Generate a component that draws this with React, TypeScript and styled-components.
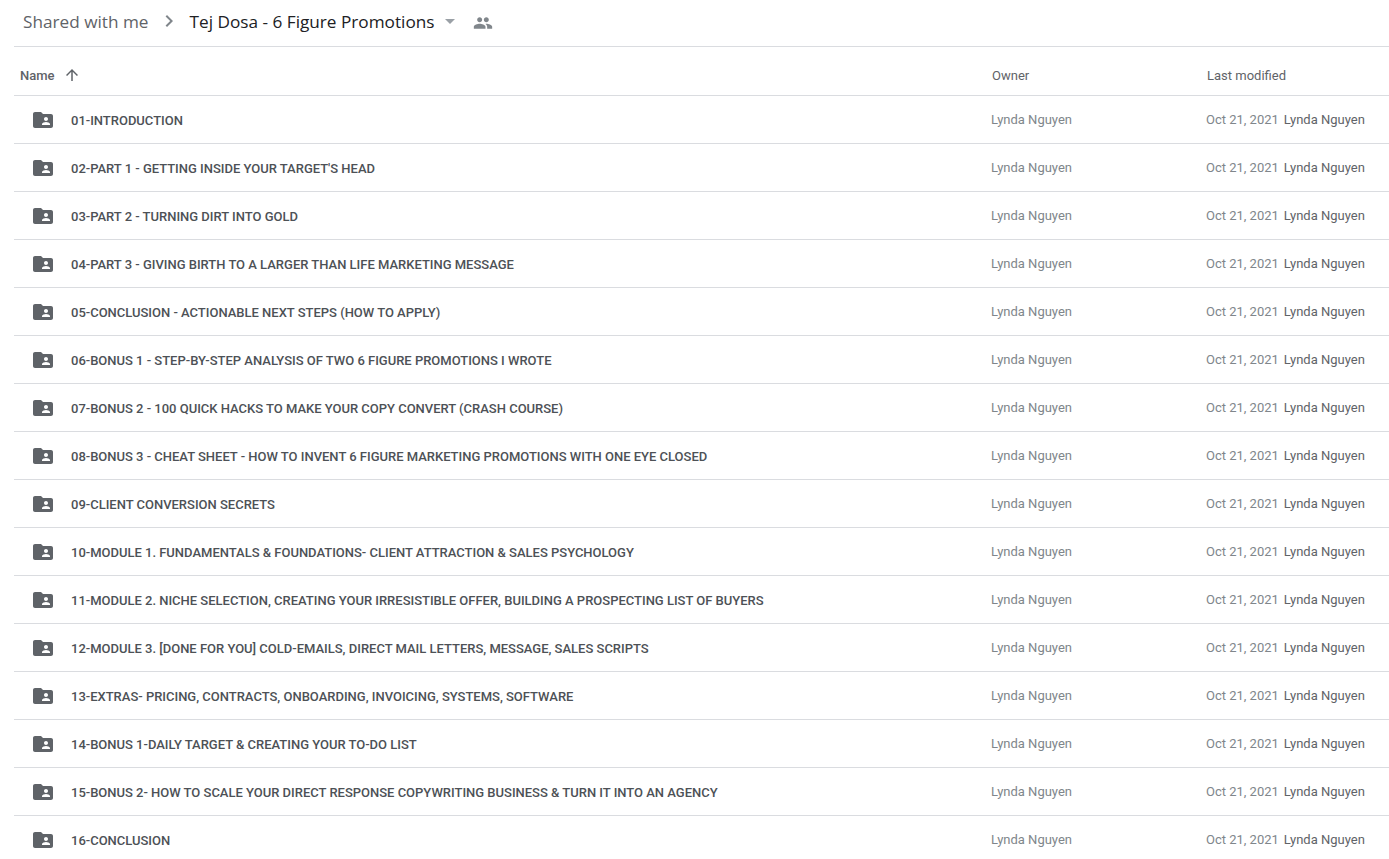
import React from 'react'
import styled, { createGlobalStyle } from 'styled-components'

const GlobalStyle = createGlobalStyle`
  html, body {
    margin: 0;
    padding: 0;
    height: 100%;
    overflow: hidden;
    background: #fff;
    font-family: Roboto, "Liberation Sans", sans-serif;
  }
`

const Page = styled.div`
  width: 1389px;
  height: 859px;
  overflow: hidden;
  padding-left: 14px;
  box-sizing: border-box;
`

const Breadcrumb = styled.header`
  height: 46px;
  display: flex;
  align-items: center;
  padding-left: 9px;
  border-bottom: 1px solid #dadce0;
  font-family: "Open Sans", sans-serif;
  font-size: 17.2px;
`

const Crumb = styled.span<{ $current?: boolean }>`
  color: ${p => (p.$current ? '#202124' : '#5f6368')};
  white-space: nowrap;
  margin-bottom: 4px;
`

const Chevron = styled.svg`
  width: 24px;
  height: 24px;
  margin: 0 9px 4px 8px;
  fill: #80868b;
`

const Caret = styled.svg`
  width: 24px;
  height: 24px;
  margin: 0 0 4px 4px;
  fill: #9aa0a6;
`

const PeopleIcon = styled.svg`
  width: 20px;
  height: 20px;
  margin-left: 11px;
  fill: #80868b;
`

const Columns = styled.div`
  display: grid;
  grid-template-columns: 978px 215px 1fr;
  align-items: center;
`

const HeaderRow = styled(Columns)`
  height: 49px;
  border-bottom: 1px solid #dadce0;
  font-size: 13px;
  color: #5f6368;
  padding-top: 8px;
  box-sizing: border-box;
`

const NameHead = styled.div`
  display: flex;
  align-items: center;
  padding-left: 6px;
  font-weight: 500;
`

const SortArrow = styled.svg`
  width: 18px;
  height: 18px;
  margin-left: 8px;
  fill: #5f6368;
`

const HeadCell = styled.div``

const Row = styled(Columns)`
  height: 47px;
  border-bottom: 1px solid #dadce0;
  font-size: 13px;
  color: #80868b;
`

const NameCell = styled.div`
  display: flex;
  align-items: center;
  padding-left: 17px;
  color: #4d5156;
  white-space: nowrap;
`

const FolderName = styled.span`
  margin-top: 2px;
  font-weight: 500;
  letter-spacing: -0.01px;
`

const FolderIcon = styled.svg`
  width: 24px;
  height: 24px;
  margin-right: 16px;
  fill: #5f6368;
`

const OwnerCell = styled.div`
  margin-left: -1px;
`

const ModifiedCell = styled.div`
  margin-left: -1px;
  white-space: nowrap;
`

const Modifier = styled.span`
  margin-left: 5px;
  color: #5f6368;
`

const folders = [
  "01-INTRODUCTION",
  "02-PART 1 - GETTING INSIDE YOUR TARGET'S HEAD",
  '03-PART 2 - TURNING DIRT INTO GOLD',
  '04-PART 3 - GIVING BIRTH TO A LARGER THAN LIFE MARKETING MESSAGE',
  '05-CONCLUSION - ACTIONABLE NEXT STEPS (HOW TO APPLY)',
  '06-BONUS 1 - STEP-BY-STEP ANALYSIS OF TWO 6 FIGURE PROMOTIONS I WROTE',
  '07-BONUS 2 - 100 QUICK HACKS TO MAKE YOUR COPY CONVERT (CRASH COURSE)',
  '08-BONUS 3 - CHEAT SHEET - HOW TO INVENT 6 FIGURE MARKETING PROMOTIONS WITH ONE EYE CLOSED',
  '09-CLIENT CONVERSION SECRETS',
  '10-MODULE 1. FUNDAMENTALS & FOUNDATIONS- CLIENT ATTRACTION & SALES PSYCHOLOGY',
  '11-MODULE 2. NICHE SELECTION, CREATING YOUR IRRESISTIBLE OFFER, BUILDING A PROSPECTING LIST OF BUYERS',
  '12-MODULE 3. [DONE FOR YOU] COLD-EMAILS, DIRECT MAIL LETTERS, MESSAGE, SALES SCRIPTS',
  '13-EXTRAS- PRICING, CONTRACTS, ONBOARDING, INVOICING, SYSTEMS, SOFTWARE',
  '14-BONUS 1-DAILY TARGET & CREATING YOUR TO-DO LIST',
  '15-BONUS 2- HOW TO SCALE YOUR DIRECT RESPONSE COPYWRITING BUSINESS & TURN IT INTO AN AGENCY',
  '16-CONCLUSION',
]

const peoplePath =
  'M16 11c1.66 0 2.99-1.34 2.99-3S17.66 5 16 5s-3 1.34-3 3 1.34 3 3 3zm-8 0c1.66 0 2.99-1.34 2.99-3S9.66 5 8 5 5 6.34 5 8s1.34 3 3 3zm0 2c-2.33 0-7 1.17-7 3.5V19h14v-2.5C15 14.17 10.33 13 8 13zm8 0c-.29 0-.62.02-.97.05 1.16.84 1.97 1.97 1.97 3.45V19h6v-2.5c0-2.33-4.67-3.5-7-3.5z'

const folderPath =
  'M10 4H4c-1.1 0-2 .9-2 2v12c0 1.1.9 2 2 2h16c1.1 0 2-.9 2-2V8c0-1.1-.9-2-2-2h-8l-2-2zm5 5c1.1 0 2 .9 2 2s-.9 2-2 2-2-.9-2-2 .9-2 2-2zm4 8h-8v-1c0-1.33 2.67-2 4-2s4 .67 4 2v1z'

export default function App() {
  return (
    <Page>
      <GlobalStyle />
      <Breadcrumb>
        <Crumb>Shared with me</Crumb>
        <Chevron viewBox="0 0 24 24">
          <path d="M10 6 8.59 7.41 13.17 12l-4.58 4.59L10 18l6-6z" />
        </Chevron>
        <Crumb $current>Tej Dosa - 6 Figure Promotions</Crumb>
        <Caret viewBox="0 0 24 24">
          <path d="M7 10l5 5 5-5z" />
        </Caret>
        <PeopleIcon viewBox="0 0 24 24">
          <path d={peoplePath} />
        </PeopleIcon>
      </Breadcrumb>
      <HeaderRow>
        <NameHead>
          Name
          <SortArrow viewBox="0 0 24 24">
            <path d="M4 12l1.41 1.41L11 7.83V20h2V7.83l5.58 5.59L20 12l-8-8-8 8z" />
          </SortArrow>
        </NameHead>
        <HeadCell>Owner</HeadCell>
        <HeadCell>Last modified</HeadCell>
      </HeaderRow>
      {folders.map(name => (
        <Row key={name}>
          <NameCell>
            <FolderIcon viewBox="0 0 24 24">
              <path d={folderPath} />
            </FolderIcon>
            <FolderName>{name}</FolderName>
          </NameCell>
          <OwnerCell>Lynda Nguyen</OwnerCell>
          <ModifiedCell>
            Oct 21, 2021
            <Modifier>Lynda Nguyen</Modifier>
          </ModifiedCell>
        </Row>
      ))}
    </Page>
  )
}
